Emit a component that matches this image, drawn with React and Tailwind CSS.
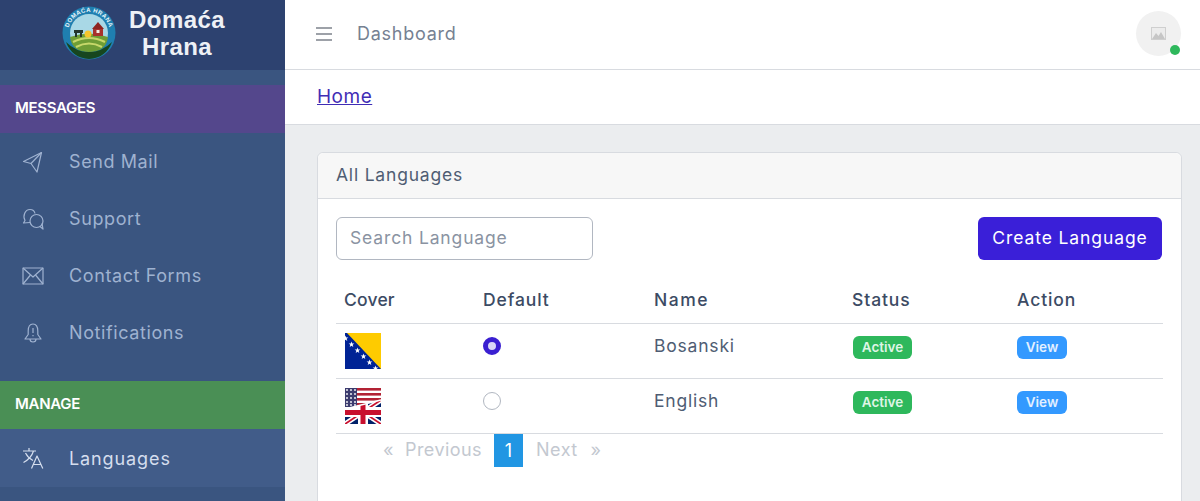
import React from 'react';

const FONT = "font-['Inter','Open_Sans',sans-serif]";

// sidebar icons, drawn to match the thin outline set in the reference
function Icon({ children }) {
  return (
    <svg width="22" height="22" viewBox="0 0 22 22" fill="none" stroke="currentColor" strokeWidth="1.2" strokeLinejoin="round" className="shrink-0">
      {children}
    </svg>
  );
}

const SendIcon = () => (
  <Icon>
    <path d="M19.5 1.5 L1.5 10.5 L9 12.5 L15 21Z" />
    <path d="M19.5 1.5 L9 12.5" />
  </Icon>
);

const SupportIcon = () => (
  <Icon>
    <path d="M8 14.5 L1.5 15 L3 12.5 C0.5 8 3 1.5 8 1.5 C10.5 1.5 12.5 3 13 5.5" />
    <circle cx="14.5" cy="13" r="6.5" />
    <path d="M18 18.5 L21 21 L20 15.5" />
  </Icon>
);

const MailIcon = () => (
  <Icon>
    <rect x="1" y="3" width="20" height="16" />
    <path d="M1 3 L11 12 L21 3" />
    <path d="M1 19 L8.5 10 M21 19 L13.5 10" />
  </Icon>
);

const BellIcon = () => (
  <Icon>
    <path d="M11 2 C7 2 6.2 6 6.2 9 V12.5 L3 17 H19 L15.8 12.5 V9 C15.8 6 15 2 11 2Z" />
    <path d="M8 17 C8 21 14 21 14 17" />
    <path d="M11 6 V11 M11 13 V14.2" />
  </Icon>
);

const LanguageIcon = () => (
  <Icon>
    <path d="M1 4 H14 M7 1 V4 M11.5 4 C10 9 6 13 1.5 15.5 M3.5 6 C5 9 8 12 11 13.5" />
    <path d="M9.5 21.5 L15 9 L20.8 21.5 M11.3 17.5 H19" />
  </Icon>
);

function Logo() {
  return (
    <svg width="54" height="54" viewBox="0 0 54 54">
      <defs>
        <path id="logoArc" d="M6 27 A21 21 0 0 1 48 27" />
      </defs>
      <circle cx="27" cy="27" r="26.5" fill="#1f7fb0" />
      <circle cx="27" cy="27" r="19" fill="#a9d8e6" />
      <text fontSize="6" fontWeight="700" fill="#eaf6fb" fontFamily="Liberation Sans" letterSpacing="0.4">
        <textPath href="#logoArc" startOffset="8%">DOMAĆA HRANA</textPath>
      </text>
      <path d="M8 31 Q27 24 46 31 Q44 46 27 46 Q10 46 8 31Z" fill="#6f9d35" />
      <path d="M11 36 Q27 28 43 36 M14 41 Q27 34 40 41" stroke="#c7d86a" strokeWidth="2" fill="none" />
      <path d="M4 36 Q10 52 27 53 Q44 52 50 36 Q40 46 27 46 Q14 46 4 36Z" fill="#17461f" />
      <circle cx="26" cy="28" r="3.5" fill="#f5c52c" />
      <rect x="31" y="22" width="10" height="8" fill="#a8322c" />
      <path d="M30 23 L36 16 L42 23Z" fill="#8e2420" />
      <rect x="34.5" y="24" width="3" height="3" fill="#f4efe4" />
      <rect x="12" y="24" width="9" height="3" fill="#24352c" />
      <rect x="13" y="27" width="2" height="4" fill="#24352c" />
      <rect x="18" y="27" width="2" height="4" fill="#24352c" />
    </svg>
  );
}

function BosniaFlag() {
  const stars = [2, 8, 14, 20, 26, 32];
  return (
    <svg width="36" height="36" viewBox="0 0 36 36" className="ml-[1px] block">
      <rect width="36" height="36" fill="#002395" />
      <path d="M2 0 H36 V36Z" fill="#fecb00" />
      {stars.map(s => (
        <polygon
          key={s}
          transform={`translate(${s - 1.5} ${s + 3.5}) scale(0.36)`}
          points="0,-8 2,-2.5 8,-2.5 3.2,1 5,7 0,3.4 -5,7 -3.2,1 -8,-2.5 -2,-2.5"
          fill="#fff"
        />
      ))}
    </svg>
  );
}

function UsUkFlag() {
  return (
    <svg width="36" height="36" viewBox="0 0 36 36" className="ml-[1px] block">
      <defs>
        <clipPath id="ukPart">
          <polygon points="0,21 36,12 36,36 0,36" />
        </clipPath>
      </defs>
      <rect width="36" height="36" fill="#fff" />
      {[0, 5, 10, 15].map(y => <rect key={y} y={y} width="36" height="2.6" fill="#b22234" />)}
      <rect width="12" height="19" fill="#3c3b6e" />
      {[2, 6, 10, 14, 17].map(y => [2, 6, 10].map(x => <circle key={x + '-' + y} cx={x} cy={y} r="0.9" fill="#fff" />))}
      <g clipPath="url(#ukPart)">
        <rect width="36" height="36" fill="#012169" />
        <path d="M0 12 L36 36 M36 12 L0 36" stroke="#fff" strokeWidth="5" />
        <path d="M0 12 L36 36 M36 12 L0 36" stroke="#c8102e" strokeWidth="1.8" />
        <rect x="13" width="10" height="36" fill="#fff" />
        <rect y="19" width="36" height="10" fill="#fff" />
        <rect x="15.5" width="5" height="36" fill="#c8102e" />
        <rect y="22" width="36" height="5" fill="#c8102e" />
      </g>
      <path d="M0 21 L36 12" stroke="#fff" strokeWidth="1.6" />
    </svg>
  );
}

function NavItem({ icon, label, active }) {
  return (
    <div className={`flex items-center pl-[22px] ${active ? 'h-[58px] bg-[#415c89] text-[#d5deee]' : 'h-[57px] text-[#9fb2d0]'}`}>
      {icon}
      <span className={`ml-[25px] text-[18px] ${active ? 'tracking-[0.9px]' : 'tracking-[0.6px]'}`}>{label}</span>
    </div>
  );
}

function Row({ flag, selected, name }) {
  return (
    <tr className="h-[55px] border-b border-[#d8dbe0] text-[#4f5d73]">
      <td className="px-2 pt-[9px] align-top">{flag}</td>
      <td className="px-2 pt-[13px] align-top">
        {selected
          ? <span className="block h-[18px] w-[18px] rounded-full border-[5px] border-[#3a1fd1] bg-[#d9d6f7]" />
          : <span className="block h-[18px] w-[18px] rounded-full border border-[#b1b7c1] bg-white" />}
      </td>
      <td className="px-2 pt-[10px] align-top text-[17.5px] leading-[24px] tracking-[0.8px]">{name}</td>
      <td className="px-2 pt-[12px] align-top">
        <span className="ml-[1px] flex h-[23px] w-[59px] items-center justify-center rounded-[6px] bg-[#2eb85c] text-[13.5px] font-semibold text-[#dff5e6]">Active</span>
      </td>
      <td className="px-2 pt-[12px] align-top">
        <span className="flex h-[23px] w-[50px] items-center justify-center rounded-[6px] bg-[#39f] text-[13.5px] font-semibold text-[#e3f0ff]">View</span>
      </td>
    </tr>
  );
}

export default function App() {
  return (
    <div className={`flex h-[501px] w-[1200px] overflow-hidden bg-[#ebedef] ${FONT}`}>
      <aside className="w-[285px] shrink-0 bg-[#3a5580]">
        <div className="flex h-[70px] items-center bg-[#2d4270] pb-[4px] pl-[62px]">
          <Logo />
          <div className="ml-[13px] w-[96px] text-center font-['Liberation_Sans',sans-serif] text-[24px] leading-[27px] font-bold tracking-[0.4px] text-[#eef1f6]">
            Domaća<br />Hrana
          </div>
        </div>
        <div className="mt-[15px] flex h-[48px] items-center bg-[#54478c] pb-[2px] pl-[15px] text-[15px] font-semibold tracking-[-0.3px] text-white">MESSAGES</div>
        <NavItem icon={<SendIcon />} label="Send Mail" />
        <NavItem icon={<SupportIcon />} label="Support" />
        <NavItem icon={<MailIcon />} label="Contact Forms" />
        <NavItem icon={<BellIcon />} label="Notifications" />
        <div className="mt-[20px] flex h-[48px] items-center bg-[#4a8f55] pb-[2px] pl-[15px] text-[15px] font-semibold tracking-[-0.3px] text-white">MANAGE</div>
        <NavItem icon={<LanguageIcon />} label="Languages" active />
      </aside>

      <main className="min-w-0 flex-1">
        <header className="flex h-[70px] items-center border-b border-[#d8dbe0] bg-white pr-[19px] pb-[2px] pl-[31px]">
          <svg width="16" height="14" viewBox="0 0 16 14" stroke="#7d838c" strokeWidth="1.3" className="shrink-0">
            <path d="M0 1 H16 M0 7 H16 M0 13 H16" />
          </svg>
          <span className="ml-[25px] text-[18px] tracking-[0.75px] text-[#768192]">Dashboard</span>
          <div className="relative ml-auto flex h-[45px] w-[45px] items-center justify-center rounded-full bg-[#f1f1f1]">
            <svg width="15" height="13" viewBox="0 0 15 13" className="block">
              <rect x="0.5" y="0.5" width="14" height="12" fill="#ececec" stroke="#cfcfcf" />
              <path d="M1 12 L5 6 L7.5 9 L10 5 L14 12Z" fill="#c6c6c6" />
            </svg>
            <span className="absolute right-[1px] bottom-[1px] h-[10px] w-[10px] rounded-full bg-[#2eb85c]" />
          </div>
        </header>
        <div className="flex h-[55px] items-center border-b border-[#d8dbe0] bg-white pt-[1px] pl-[32px]">
          <a href="#home" className="text-[19px] tracking-[0.5px] text-[#3f2db5] underline">Home</a>
        </div>

        <section className="mt-[27px] mr-[18px] ml-[32px] h-[400px] rounded-[6px] border border-[#d8dbe0] bg-white">
          <div className="flex h-[46px] items-center rounded-t-[6px] border-b border-[#d8dbe0] bg-[#f7f7f7] pl-[18px] text-[17.5px] tracking-[0.8px] text-[#4f5d73]">
            All Languages
          </div>
          <div className="pt-[18px] pr-[18px] pl-[18px]">
            <div className="flex items-center justify-between pr-[1px]">
              <input
                placeholder="Search Language"
                className="h-[43px] w-[257px] rounded-[6px] border border-[#b1b7c1] bg-white px-[13px] pb-[2px] text-[17.5px] tracking-[0.85px] placeholder:text-[#8a93a2]"
              />
              <button className="h-[43px] w-[184px] rounded-[6px] bg-[#3a1fd8] text-[17.5px] tracking-[0.9px] text-white">Create Language</button>
            </div>
            <table className="mt-[17px] w-[827px] table-fixed border-collapse text-left">
              <colgroup>
                <col className="w-[139px]" />
                <col className="w-[171px]" />
                <col className="w-[198px]" />
                <col className="w-[165px]" />
                <col className="w-[154px]" />
              </colgroup>
              <thead>
                <tr className="h-[46px] border-b border-[#d8dbe0] text-[17.5px] text-[#3c4b64]">
                  <th className="px-2 font-medium tracking-[0.2px]">Cover</th>
                  <th className="px-2 font-medium tracking-[0.9px]">Default</th>
                  <th className="px-2 font-medium tracking-[1.5px]">Name</th>
                  <th className="px-2 font-medium tracking-[0.9px]">Status</th>
                  <th className="px-2 font-medium tracking-[0.9px]">Action</th>
                </tr>
              </thead>
              <tbody>
                <Row flag={<BosniaFlag />} selected name="Bosanski" />
                <Row flag={<UsUkFlag />} name="English" />
              </tbody>
            </table>
            <div className="flex h-[33px] items-center pl-[47px] text-[18px] tracking-[0.45px] text-[#c3c8d0]">
              <span className="pb-[1px]">«</span>
              <span className="ml-[11px] pb-[1px]">Previous</span>
              <span className="ml-[12px] flex h-[33px] w-[29px] items-center justify-center bg-[#2196e3] text-white">1</span>
              <span className="ml-[13px] pb-[1px]">Next</span>
              <span className="ml-[13px] pb-[1px]">»</span>
            </div>
          </div>
        </section>
      </main>
    </div>
  );
}
